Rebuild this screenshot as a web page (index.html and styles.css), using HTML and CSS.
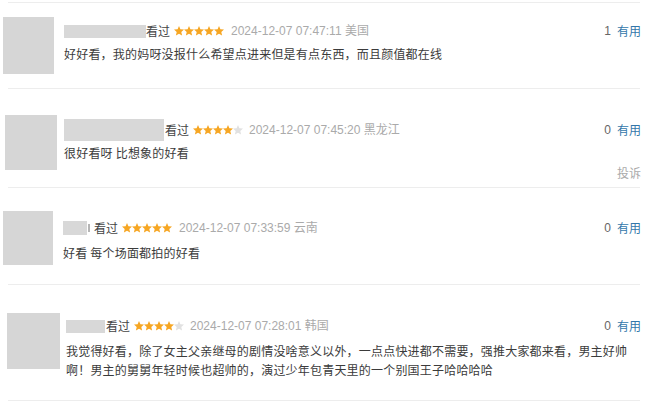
FILE: index.html
```html
<!DOCTYPE html>
<html lang="zh-CN">
<head>
<meta charset="utf-8">
<title>短评</title>
<link rel="stylesheet" href="styles.css">
</head>
<body>
<svg width="0" height="0" class="defs" aria-hidden="true">
  <defs>
    <symbol id="star" viewBox="0 0 10 10">
      <polygon points="5,0 6.4,3.3 10,3.6 7.3,6 8.1,9.6 5,7.7 1.9,9.6 2.7,6 0,3.6 3.6,3.3"/>
    </symbol>
  </defs>
</svg>
<div class="list">
  <hr class="sep">
  <div class="item item-1">
    <div class="avatar"></div>
    <div class="body">
      <div class="head">
        <span class="name"></span>
        <span class="watched">看过</span>
        <span class="stars">
          <svg class="on"><use href="#star"/></svg><svg class="on"><use href="#star"/></svg><svg class="on"><use href="#star"/></svg><svg class="on"><use href="#star"/></svg><svg class="on"><use href="#star"/></svg>
        </span>
        <span class="date">2024-12-07 07:47:11 美国</span>
        <span class="useful"><span class="count">1</span><a class="vote">有用</a></span>
      </div>
      <p class="comment">好好看，我的妈呀没报什么希望点进来但是有点东西，而且颜值都在线</p>
    </div>
  </div>
  <hr class="sep">
  <div class="item item-2">
    <div class="avatar"></div>
    <div class="body">
      <div class="head">
        <span class="name"></span>
        <span class="watched">看过</span>
        <span class="stars">
          <svg class="on"><use href="#star"/></svg><svg class="on"><use href="#star"/></svg><svg class="on"><use href="#star"/></svg><svg class="on"><use href="#star"/></svg><svg class="off"><use href="#star"/></svg>
        </span>
        <span class="date">2024-12-07 07:45:20 黑龙江</span>
        <span class="useful"><span class="count">0</span><a class="vote">有用</a></span>
      </div>
      <p class="comment">很好看呀 比想象的好看</p>
      <div class="report">投诉</div>
    </div>
  </div>
  <hr class="sep">
  <div class="item item-3">
    <div class="avatar"></div>
    <div class="body">
      <div class="head">
        <span class="name"></span><span class="name-tail"></span>
        <span class="watched">看过</span>
        <span class="stars">
          <svg class="on"><use href="#star"/></svg><svg class="on"><use href="#star"/></svg><svg class="on"><use href="#star"/></svg><svg class="on"><use href="#star"/></svg><svg class="on"><use href="#star"/></svg>
        </span>
        <span class="date">2024-12-07 07:33:59 云南</span>
        <span class="useful"><span class="count">0</span><a class="vote">有用</a></span>
      </div>
      <p class="comment">好看 每个场面都拍的好看</p>
    </div>
  </div>
  <hr class="sep">
  <div class="item item-4">
    <div class="avatar"></div>
    <div class="body">
      <div class="head">
        <span class="name"></span>
        <span class="watched">看过</span>
        <span class="stars">
          <svg class="on"><use href="#star"/></svg><svg class="on"><use href="#star"/></svg><svg class="on"><use href="#star"/></svg><svg class="on"><use href="#star"/></svg><svg class="off"><use href="#star"/></svg>
        </span>
        <span class="date">2024-12-07 07:28:01 韩国</span>
        <span class="useful"><span class="count">0</span><a class="vote">有用</a></span>
      </div>
      <p class="comment">我觉得好看，除了女主父亲继母的剧情没啥意义以外，一点点快进都不需要，强推大家都来看，男主好帅啊！男主的舅舅年轻时候也超帅的，演过少年包青天里的一个别国王子哈哈哈哈</p>
    </div>
  </div>
  <hr class="sep">
</div>
</body>
</html>
```
FILE: styles.css
```css
html, body {
  margin: 0;
  padding: 0;
  background: #ffffff;
}
body {
  font-family: "Liberation Sans", "Noto Sans CJK SC", sans-serif;
  font-size: 12px;
  color: #494949;
  width: 660px;
  height: 404px;
  overflow: hidden;
}
.defs {
  position: absolute;
  width: 0;
  height: 0;
}
.list {
  padding-top: 2px;
  width: 641px;
}
.sep {
  border: 0;
  height: 1px;
  background: #ededed;
  margin: 0 1px 0 8px;
}
.item {
  display: flex;
  align-items: flex-start;
  box-sizing: border-box;
}
.avatar {
  flex: none;
  background: #d6d6d6;
}
.body {
  flex: 1;
  min-width: 0;
}
.head {
  display: flex;
  align-items: center;
  height: 16px;
  white-space: nowrap;
}
.name {
  display: block;
  background: #d8d8d8;
  height: 13px;
}
.name-tail {
  display: block;
  width: 2px;
  height: 8px;
  background: #b5b5b5;
  margin-left: 1px;
}
.watched {
  font-family: "Noto Sans CJK SC", sans-serif;
  color: #444444;
  line-height: 16px;
}
.stars {
  display: flex;
  margin: 0 7px 0 4px;
}
.stars svg {
  width: 10px;
  height: 10px;
  display: block;
}
.stars .on { fill: #f6a623; }
.stars .off { fill: #e1e1e1; }
.date {
  color: #aaaaaa;
  line-height: 16px;
}
.useful {
  margin-left: auto;
  display: flex;
  align-items: center;
  line-height: 16px;
}
.count {
  color: #666666;
  margin-right: 6px;
}
.vote {
  color: #3377aa;
  font-family: "Noto Sans CJK SC", sans-serif;
}
.comment {
  margin: 5px 0 0;
  font-family: "Noto Sans CJK SC", sans-serif;
  line-height: 20px;
  letter-spacing: 0.2px;
  color: #3b3b3b;
}
.report {
  text-align: right;
  color: #aaaaaa;
  font-family: "Noto Sans CJK SC", sans-serif;
  line-height: 16px;
  margin-top: 2px;
}

/* item 1 */
.item-1 { height: 85px; padding: 14px 0 0 3px; }
.item-1 .avatar { width: 51px; height: 57px; margin-right: 10px; }
.item-1 .body { padding-top: 6px; }
.item-1 .name { width: 82px; }

/* item 2 */
.item-2 { height: 98px; padding: 26px 0 0 5px; }
.item-2 .avatar { width: 52px; height: 55px; margin-right: 7px; }
.item-2 .body { padding-top: 7px; }
.item-2 .name { width: 100px; height: 22px; margin-right: 1px; }
.item-2 .stars { margin: 0 6px 0 4px; }

/* item 3 */
.item-3 { height: 96px; padding: 23px 0 0 3px; }
.item-3 .avatar { width: 50px; height: 54px; margin-right: 10px; }
.item-3 .body { padding-top: 9px; }
.item-3 .name { width: 24px; height: 14px; }
.item-3 .name-tail { margin-right: 4px; }
.item-3 .comment { margin-top: 7px; }

/* item 4 */
.item-4 { height: 115px; padding: 28px 0 0 7px; }
.item-4 .avatar { width: 53px; height: 56px; margin-right: 6px; }
.item-4 .body { padding-top: 5px; }
.item-4 .name { width: 39px; margin-right: 1px; }
.item-4 .stars { margin: 0 6px 0 4px; }
.item-4 .comment { line-height: 19px; margin-top: 7px; }
```
